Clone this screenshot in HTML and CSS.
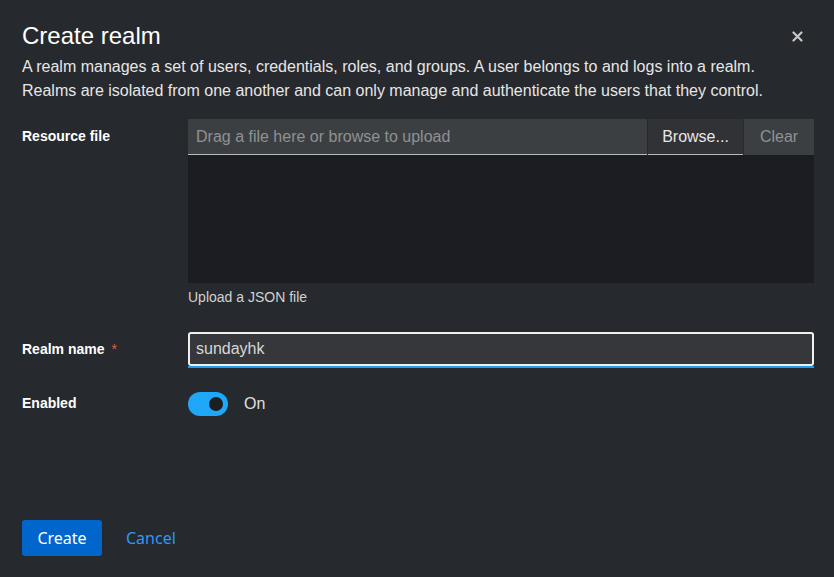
FILE: index.html
```html
<!DOCTYPE html>
<html lang="en">
<head>
<meta charset="utf-8">
<title>Create realm</title>
<link rel="stylesheet" href="styles.css">
</head>
<body>
<div class="modal">
  <header class="modal-header">
    <h1 class="modal-title">Create realm</h1>
    <button class="close" aria-label="Close">
      <svg width="11" height="11" viewBox="0 0 11 11"><path d="M1.5 1.5 L9.5 9.5 M9.5 1.5 L1.5 9.5" stroke="#c7c7c7" stroke-width="2.2" stroke-linecap="round"/></svg>
    </button>
  </header>
  <p class="modal-desc">A realm manages a set of users, credentials, roles, and groups. A user belongs to and logs into a realm.<br>Realms are isolated from one another and can only manage and authenticate the users that they control.</p>

  <form class="form">
    <div class="row row-file">
      <label class="label">Resource file</label>
      <div class="control">
        <div class="upload">
          <div class="upload-bar">
            <input class="upload-name" type="text" placeholder="Drag a file here or browse to upload" readonly>
            <button type="button" class="btn-browse">Browse...</button>
            <button type="button" class="btn-clear">Clear</button>
          </div>
          <textarea class="upload-area" readonly></textarea>
        </div>
        <div class="helper">Upload a JSON file</div>
      </div>
    </div>

    <div class="row row-name">
      <label class="label">Realm name <span class="req">*</span></label>
      <div class="control">
        <div class="text-input"><input type="text" value="sundayhk"></div>
      </div>
    </div>

    <div class="row row-enabled">
      <label class="label">Enabled</label>
      <div class="control switch-wrap">
        <span class="switch"><span class="knob"></span></span>
        <span class="switch-label">On</span>
      </div>
    </div>
  </form>

  <footer class="modal-footer">
    <button class="btn-primary">Create</button>
    <button class="btn-link">Cancel</button>
  </footer>
</div>
</body>
</html>
```

FILE: styles.css
```css
* { box-sizing: border-box; }

html, body {
  margin: 0;
  height: 100%;
  background: #26292d;
}

body {
  font-family: "Liberation Sans", Arial, sans-serif;
  color: #e0e0e0;
}

.modal {
  height: 577px;
  padding: 20px 20px 20px 22px;
  display: flex;
  flex-direction: column;
}

.modal-header {
  display: flex;
  justify-content: space-between;
  align-items: flex-start;
}

.modal-title {
  margin: 0;
  font-size: 24px;
  font-weight: 400;
  line-height: 31px;
  color: #fff;
}

.close {
  background: none;
  border: 0;
  padding: 0;
  margin: 11px 11px 0 0;
  width: 11px;
  height: 11px;
  display: block;
}
.close svg { display: block; }

.modal-desc {
  margin: 4px 0 0;
  font-size: 16px;
  line-height: 24px;
  color: #e6e6e6;
  white-space: nowrap;
}

.form {
  margin-top: 16px;
  display: flex;
  flex-direction: column;
}

.row {
  display: grid;
  grid-template-columns: 166px 1fr;
}

.label {
  font-size: 14px;
  font-weight: 700;
  color: #fff;
  line-height: 20px;
}

.req { color: #e35d4a; margin-left: 3px; font-weight: 400; }

.row-file .label { padding-top: 7px; }

.upload-bar {
  display: flex;
  height: 36px;
}

.upload-name {
  flex: 1;
  min-width: 0;
  border: 0;
  border-bottom: 1px solid #b8bbbe;
  background: #3c3f42;
  color: #e0e0e0;
  font: inherit;
  font-size: 16px;
  padding: 0 8px;
  outline: none;
}
.upload-name::placeholder { color: #8f9194; }

.btn-browse {
  width: 95px;
  margin-left: 1px;
  border: 0;
  border-bottom: 1px solid #b8bbbe;
  background: #303236;
  color: #e6e6e6;
  font: inherit;
  font-size: 16px;
  padding: 0;
}

.btn-clear {
  width: 70px;
  margin-left: 1px;
  border: 0;
  background: #3c3f42;
  color: #8f9194;
  font: inherit;
  font-size: 16px;
  padding: 0;
}

.upload-area {
  display: block;
  width: 100%;
  height: 128px;
  margin: 0;
  border: 0;
  background: #1b1d22;
  resize: none;
  outline: none;
}

.helper {
  margin-top: 4px;
  font-size: 14px;
  line-height: 20px;
  color: #d2d2d2;
}

.row-name { margin-top: 25px; }
.row-name .label { padding-top: 7px; }

.text-input {
  border-bottom: 2px solid #1f9eef;
}
.text-input input {
  display: block;
  width: 100%;
  height: 34px;
  border: 2px solid #f0f0f0;
  border-radius: 3px;
  background: #36373b;
  color: #d8d8d8;
  font: inherit;
  font-size: 16px;
  padding: 0 6px;
  outline: none;
}

.row-enabled { margin-top: 24px; }
.row-enabled .label { margin-top: 1px; }

.switch-wrap {
  display: flex;
  align-items: center;
  gap: 16px;
}

.switch {
  width: 40px;
  height: 24px;
  border-radius: 12px;
  background: #1fa7f8;
  position: relative;
}
.knob {
  position: absolute;
  right: 5px;
  top: 5px;
  width: 14px;
  height: 14px;
  border-radius: 50%;
  background: #1b1d21;
}

.switch-label {
  font-size: 16px;
  color: #e0e0e0;
}

.modal-footer {
  margin-top: auto;
  display: flex;
  align-items: center;
  gap: 24px;
  padding-bottom: 1px;
}

.btn-primary {
  width: 80px;
  height: 36px;
  border: 0;
  border-radius: 3px;
  background: #0066cc;
  color: #fff;
  font-family: "Noto Sans", "Open Sans", sans-serif;
  font-size: 16px;
  padding: 0;
}

.btn-link {
  border: 0;
  background: none;
  color: #2b9af3;
  font-family: "Noto Sans", "Open Sans", sans-serif;
  font-size: 16px;
  padding: 0;
}
```
